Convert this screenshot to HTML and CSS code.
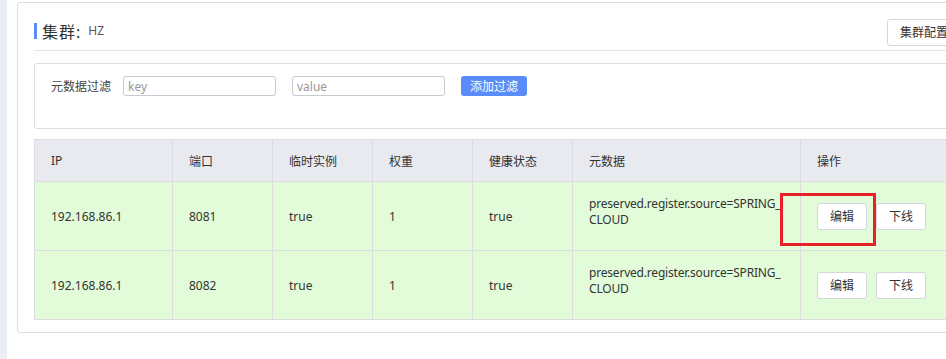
FILE: index.html
```html
<!DOCTYPE html>
<html lang="zh-CN">
<head>
    <meta charset="UTF-8">
    <title>集群 HZ</title>
    <link rel="stylesheet" href="styles.css">
</head>
<body>
    <div class="page">
        <div class="side-strip"></div>
        <div class="main">
            <div class="card">
                <div class="card-header">
                    <div class="title">
                        <span class="title-bar"></span>
                        <span class="title-label">集群:</span>
                        <span class="title-name">HZ</span>
                    </div>
                    <button class="btn btn-config">集群配置</button>
                </div>

                <div class="filter-box">
                    <div class="filter-row">
                        <label class="filter-label">元数据过滤</label>
                        <input class="filter-input" type="text" placeholder="key">
                        <input class="filter-input" type="text" placeholder="value">
                        <button class="btn-primary">添加过滤</button>
                    </div>
                </div>

                <table class="instance-table">
                    <colgroup>
                        <col style="width: 138px">
                        <col style="width: 100px">
                        <col style="width: 100px">
                        <col style="width: 100px">
                        <col style="width: 100px">
                        <col style="width: 228px">
                        <col>
                    </colgroup>
                    <thead>
                        <tr>
                            <th>IP</th>
                            <th>端口</th>
                            <th>临时实例</th>
                            <th>权重</th>
                            <th>健康状态</th>
                            <th>元数据</th>
                            <th>操作</th>
                        </tr>
                    </thead>
                    <tbody>
                        <tr>
                            <td>192.168.86.1</td>
                            <td>8081</td>
                            <td>true</td>
                            <td>1</td>
                            <td>true</td>
                            <td class="meta">preserved.register.source=SPRING_<br>CLOUD</td>
                            <td class="actions">
                                <span class="highlight"></span>
                                <button class="btn btn-small">编辑</button>
                                <button class="btn btn-small">下线</button>
                            </td>
                        </tr>
                        <tr>
                            <td>192.168.86.1</td>
                            <td>8082</td>
                            <td>true</td>
                            <td>1</td>
                            <td>true</td>
                            <td class="meta">preserved.register.source=SPRING_<br>CLOUD</td>
                            <td class="actions">
                                <button class="btn btn-small">编辑</button>
                                <button class="btn btn-small">下线</button>
                            </td>
                        </tr>
                    </tbody>
                </table>
            </div>
        </div>
    </div>
</body>
</html>
```

FILE: styles.css
```css
body {
    margin: 0;
    background: #fff;
    font-family: "Noto Sans", "Noto Sans CJK SC", sans-serif;
    color: #333;
    overflow: hidden;
}
.page {
    display: flex;
    min-height: 359px;
}
.side-strip {
    width: 7px;
    flex-shrink: 0;
    background: #eaedf1;
}
.main {
    padding: 2px 0 0 10px;
}
.card {
    width: 933px;
    padding: 0 16px 12px;
    border: 1px solid #dcdde3;
    border-radius: 3px;
    background: #fff;
}

/* header */
.card-header {
    display: flex;
    align-items: center;
    justify-content: space-between;
    height: 39px;
    padding-top: 8px;
    border-bottom: 1px solid #e3e4e8;
}
.title {
    display: flex;
    align-items: center;
}
.title-bar {
    width: 3px;
    height: 16px;
    background: #5a8cf7;
    margin-right: 5px;
}
.title-label {
    font-size: 16px;
    color: #333;
    letter-spacing: 1px;
}
.title-name {
    font-size: 12px;
    color: #555;
    margin-left: 7px;
}
.btn {
    background: #fff;
    border: 1px solid #d4d6dd;
    border-radius: 3px;
    color: #333;
    font-family: inherit;
    cursor: pointer;
    padding: 0;
}
.btn-config {
    width: 80px;
    height: 27px;
    margin-top: 3px;
    font-size: 12px;
    text-align: left;
    padding-left: 12px;
}

/* filter */
.filter-box {
    margin-top: 12px;
    border: 1px solid #dcdde3;
    border-radius: 3px;
    padding: 12px 16px 32px;
}
.filter-row {
    display: flex;
    align-items: center;
    height: 20px;
}
.filter-label {
    font-size: 12px;
    color: #444;
    width: 72px;
}
.filter-input {
    box-sizing: border-box;
    width: 153px;
    height: 20px;
    margin-right: 16px;
    padding: 0 4px;
    border: 1px solid #c8cad2;
    border-radius: 3px;
    font-family: inherit;
    font-size: 12px;
    color: #333;
    outline: none;
}
.filter-input::placeholder {
    color: #999;
}
.btn-primary {
    width: 66px;
    height: 20px;
    padding: 0;
    border: none;
    border-radius: 3px;
    background: #5a8cf7;
    color: #fff;
    font-family: inherit;
    font-size: 12px;
    cursor: pointer;
}

/* table */
.instance-table {
    margin-top: 10px;
    width: 100%;
    border-collapse: collapse;
    table-layout: fixed;
    font-size: 12px;
}
.instance-table th,
.instance-table td {
    border: 1px solid #dcdde3;
    padding: 0 16px;
    text-align: left;
    font-weight: normal;
    color: #333;
}
.instance-table th {
    height: 41px;
    background: #e9eaef;
}
.instance-table td {
    height: 68px;
    background: #e2fcd9;
}
.instance-table td.meta {
    height: 60px;
    line-height: 16px;
    padding-bottom: 8px;
    letter-spacing: -0.2px;
}
.instance-table td.actions {
    position: relative;
    padding-left: 16px;
}
.btn-small {
    width: 50px;
    height: 27px;
    font-size: 12px;
    margin-right: 6px;
}
.highlight {
    position: absolute;
    left: -21px;
    top: 11px;
    width: 90px;
    height: 47px;
    border: 3px solid #e8202a;
    pointer-events: none;
}
```
